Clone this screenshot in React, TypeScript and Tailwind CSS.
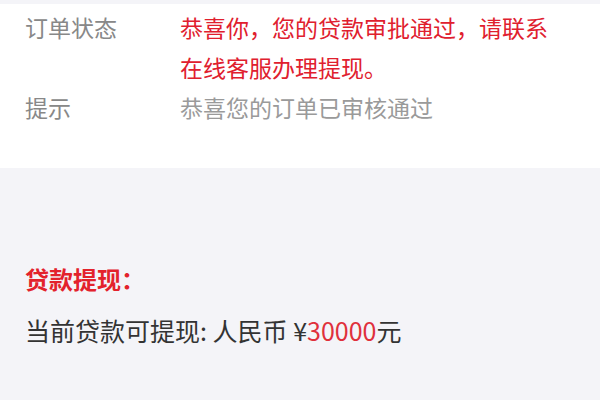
export default function App() {
  return (
    <div className="min-h-[400px] w-[600px] bg-[#f4f4f8] pt-[4px] font-['Noto_Sans_CJK_SC',sans-serif] text-[23px]">
      <section className="bg-white pb-[41px] pl-[25px] pr-[30px] pt-[3px] leading-[40px]">
        <div className="flex">
          <span className="w-[155px] shrink-0 text-[#888888]">订单状态</span>
          <span className="text-[#e0202e]">恭喜你，您的贷款审批通过，请联系在线客服办理提现。</span>
        </div>
        <div className="flex">
          <span className="w-[155px] shrink-0 text-[#888888]">提示</span>
          <span className="text-[#9a9a9a]">恭喜您的订单已审核通过</span>
        </div>
      </section>
      <section className="px-[25px] pt-[86px] leading-[50px]">
        <div className="text-[24px] font-bold text-[#e3222c]">贷款提现：</div>
        <div className="mt-[1px] text-[25px] text-[#333333]">
          当前贷款可提现: 人民币 ¥<span className="text-[#e0303c]">30000</span>元
        </div>
      </section>
    </div>
  );
}
